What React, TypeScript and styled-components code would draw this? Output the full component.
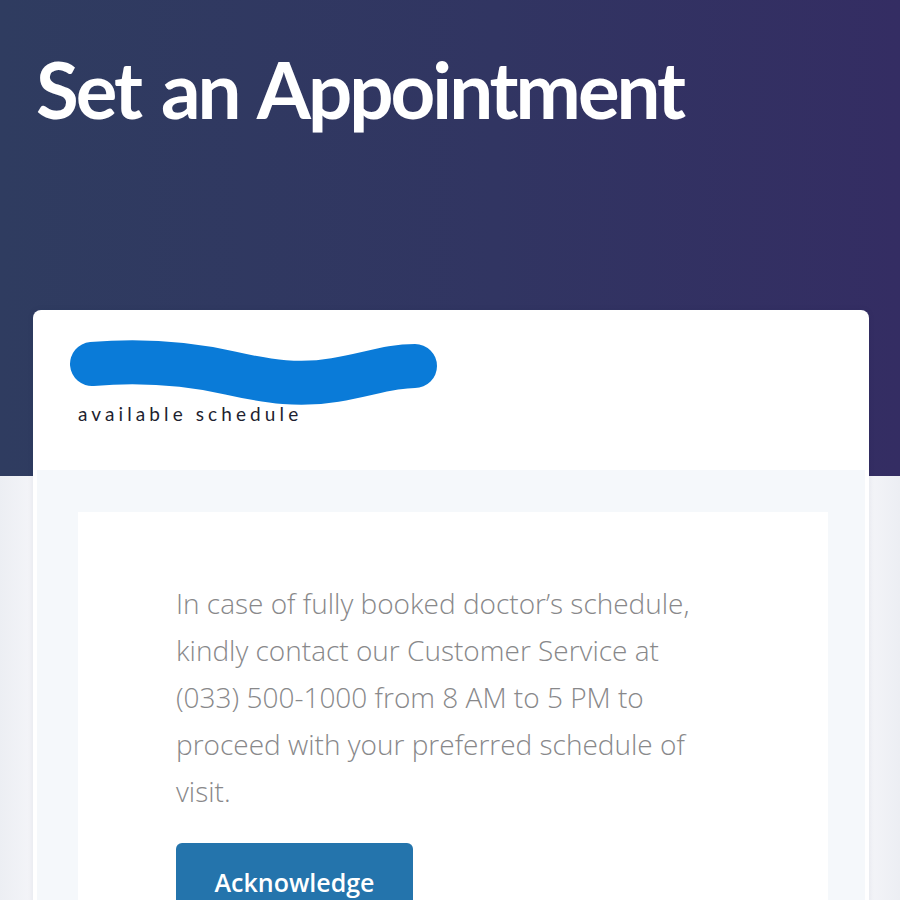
import React from "react";
import styled, { createGlobalStyle } from "styled-components";

const GlobalStyle = createGlobalStyle`
  html, body { margin: 0; padding: 0; }
  body {
    background: #f2f3f7;
    font-family: "Open Sans", "Liberation Sans", sans-serif;
  }
`;

const Page = styled.div`
  width: 900px;
  min-height: 900px;
  overflow: hidden;
  background: linear-gradient(90deg, #eceef3 0px, #f3f4f8 30px, #f3f4f8 870px, #eceef3 900px);
`;

const Hero = styled.header`
  height: 476px;
  box-sizing: border-box;
  padding: 44px 0 0 36px;
  background: linear-gradient(90deg, #2f3c60 0%, #313562 55%, #342d63 100%);
`;

const Title = styled.h1`
  margin: 0;
  font-family: Lato, "Liberation Sans", sans-serif;
  font-weight: 700;
  font-size: 78px;
  line-height: 90px;
  color: #ffffff;
  letter-spacing: -3px;
  word-spacing: 5px;
`;

const Card = styled.section`
  margin: -166px 31px 0 33px;
  background: #ffffff;
  border-radius: 8px 8px 0 0;
  box-shadow: 0 0 6px rgba(30, 40, 80, 0.08);
`;

const CardHeader = styled.div`
  height: 160px;
  box-sizing: border-box;
  padding: 30px 0 0 39px;
  display: flex;
  flex-direction: column;
  align-items: flex-start;
`;

const Redaction = styled.svg`
  display: block;
  width: 370px;
  height: 66px;
  margin-left: -2px;
`;

const Subtitle = styled.div`
  font-family: Lato, "Liberation Sans", sans-serif;
  font-weight: 400;
  font-size: 19px;
  line-height: 22px;
  letter-spacing: 4.1px;
  color: #1e1f30;
  margin: -3px 0 0 6px;
`;

const CardBody = styled.div`
  margin: 0 4px;
  padding: 42px 37px 0 41px;
  background: #f5f8fb;
`;

const Notice = styled.div`
  background: #ffffff;
  padding: 68px 0 0 98px;
  min-height: 400px;
`;

const Message = styled.p`
  margin: 0;
  max-width: 535px;
  font-family: "Open Sans", sans-serif;
  font-weight: 300;
  font-size: 28px;
  line-height: 47px;
  color: #88888a;
`;

const Button = styled.button`
  margin-top: 28px;
  width: 237px;
  height: 78px;
  padding: 0;
  border: none;
  border-radius: 6px;
  background: #2474ac;
  color: #ffffff;
  font-family: "Open Sans", sans-serif;
  font-weight: 600;
  font-size: 25px;
  display: flex;
  justify-content: center;
  align-items: center;
  cursor: pointer;
`;

export default function App() {
  return (
    <Page>
      <GlobalStyle />
      <Hero>
        <Title>Set an Appointment</Title>
      </Hero>
      <Card>
        <CardHeader>
          <Redaction viewBox="0 0 370 66">
            <path
              d="M22 24 C 70 20, 120 24, 160 33 S 230 46, 265 40 S 320 26, 345 26"
              fill="none"
              stroke="#0a7bd8"
              strokeWidth="44"
              strokeLinecap="round"
            />
          </Redaction>
          <Subtitle>available schedule</Subtitle>
        </CardHeader>
        <CardBody>
          <Notice>
            <Message>
              In case of fully booked doctor’s schedule, kindly contact our Customer Service at (033) 500-1000 from 8 AM to 5 PM to proceed with your preferred schedule of visit.
            </Message>
            <Button>Acknowledge</Button>
          </Notice>
        </CardBody>
      </Card>
    </Page>
  );
}
